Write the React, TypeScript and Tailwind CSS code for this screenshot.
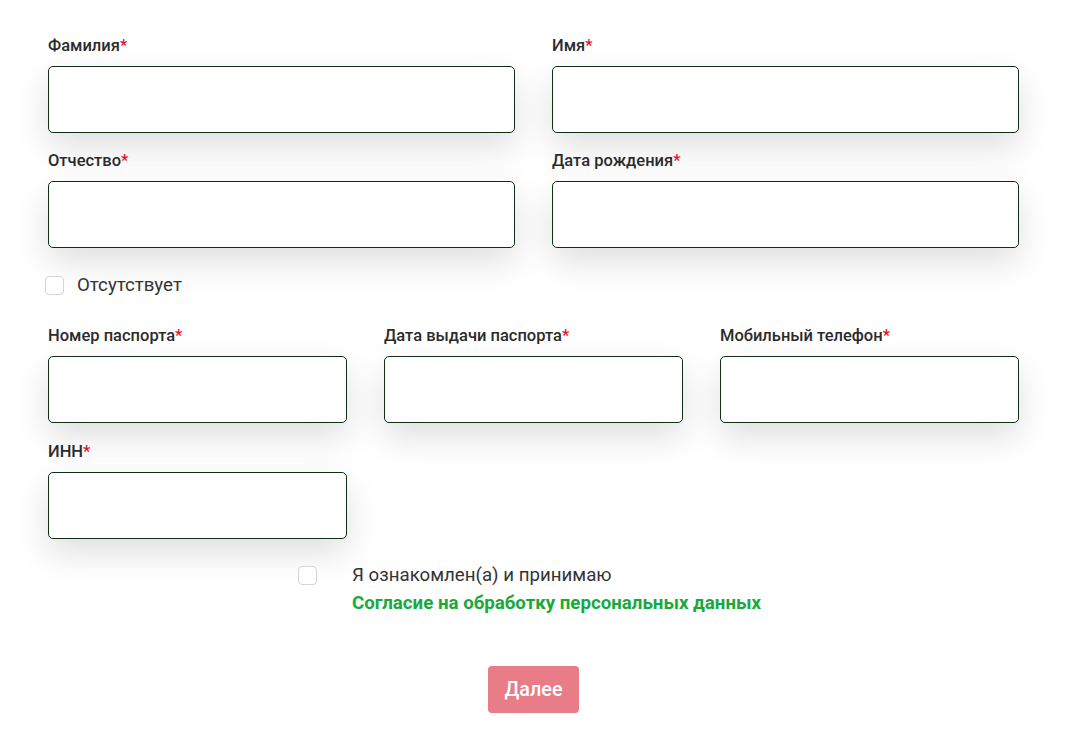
import React from "react";

const inputCls =
  "block w-full h-[67px] rounded-[5px] border border-[#0f2e12] bg-white shadow-[0_14px_34px_rgba(0,0,0,0.13)] outline-none px-3";

function Field({ label }: { label: string }) {
  return (
    <label className="flex flex-col">
      <span className="text-[16.5px] font-medium leading-[20px] text-[#2b2b2b] mb-[10px]">
        {label}
        <span className="text-[#e3101e]">*</span>
      </span>
      <input type="text" className={inputCls} />
    </label>
  );
}

function Box() {
  return (
    <span className="block w-[19px] h-[19px] rounded-[4px] border border-[#d4d4d4] bg-white shrink-0" />
  );
}

export default function App() {
  return (
    <div
      className="min-h-[746px] bg-white px-[48px] pt-[36px]"
      style={{ fontFamily: "Roboto, 'Noto Sans', sans-serif" }}
    >
      <div className="w-[971px]">
        <div className="grid grid-cols-2 gap-x-[37px] gap-y-[18px]">
          <Field label="Фамилия" />
          <Field label="Имя" />
          <Field label="Отчество" />
          <Field label="Дата рождения" />
        </div>

        <div className="flex items-center gap-[13px] mt-[26px] -ml-[3px]">
          <Box />
          <span className="text-[18.7px] leading-[22px] text-[#333]">Отсутствует</span>
        </div>

        <div className="grid grid-cols-3 gap-x-[37px] gap-y-[19px] mt-[30px]">
          <Field label="Номер паспорта" />
          <Field label="Дата выдачи паспорта" />
          <Field label="Мобильный телефон" />
          <Field label="ИНН" />
        </div>

        <div className="flex justify-center mt-[25px] pr-[8px]">
          <div className="flex gap-[35px]">
            <div className="pt-[2px]">
              <Box />
            </div>
            <div className="flex flex-col">
              <span className="text-[18.7px] leading-[22px] text-[#333]">
                Я ознакомлен(а) и принимаю
              </span>
              <a className="text-[18.7px] leading-[22px] font-bold text-[#18a93c] mt-[6px] cursor-pointer">
                Согласие на обработку персональных данных
              </a>
            </div>
          </div>
        </div>

        <div className="flex justify-center mt-[52px]">
          <button className="w-[91px] h-[47px] rounded-[4px] bg-[#e87c87] text-white text-[19.8px] font-medium">
            Далее
          </button>
        </div>
      </div>
    </div>
  );
}
